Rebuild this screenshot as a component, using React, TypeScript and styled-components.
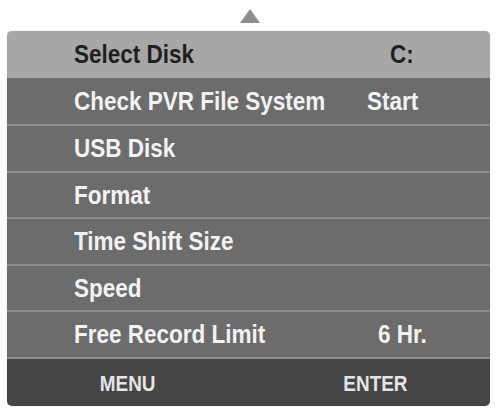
import styled, { createGlobalStyle } from "styled-components";

const GlobalStyle = createGlobalStyle`
  body {
    margin: 0;
    background: #ffffff;
    font-family: "Liberation Sans", Arial, sans-serif;
  }
`;

const items = [
  { label: "Check PVR File System", value: "Start", offset: 0, height: 46 },
  { label: "USB Disk", value: "", offset: 0, height: 47 },
  { label: "Format", value: "", offset: 0, height: 46 },
  { label: "Time Shift Size", value: "", offset: 0, height: 47 },
  { label: "Speed", value: "", offset: 0, height: 46 },
  { label: "Free Record Limit", value: "6 Hr.", offset: 11, height: 47 },
];

const App = () => {
  return (
    <Page>
      <GlobalStyle />
      <ArrowUp />
      <Panel>
        <HeaderRow>
          <Label>Select Disk</Label>
          <Value offset={23}>C:</Value>
        </HeaderRow>
        {items.map((item) => (
          <Row key={item.label} h={item.height}>
            <Label>{item.label}</Label>
            <Value offset={item.offset}>{item.value}</Value>
          </Row>
        ))}
        <Footer>
          <FooterKey>MENU</FooterKey>
          <FooterKey>ENTER</FooterKey>
        </Footer>
      </Panel>
    </Page>
  );
};

const Page = styled.div`
  width: 496px;
  height: 412px;
  padding-top: 9px;
  box-sizing: border-box;
  display: flex;
  flex-direction: column;
`;

const ArrowUp = styled.div`
  width: 0;
  height: 0;
  margin-left: 240px;
  border-left: 10.5px solid transparent;
  border-right: 10.5px solid transparent;
  border-bottom: 14px solid #8e8e8e;
`;

const Panel = styled.div`
  margin: 8px 0 0 7px;
  width: 483px;
  border-radius: 5px;
  overflow: hidden;
  box-shadow: 0 0 1px #9a9a9a;
  display: flex;
  flex-direction: column;
`;

const RowBase = styled.div`
  display: grid;
  grid-template-columns: 293px 1fr;
  align-items: center;
  padding-left: 67px;
  box-sizing: border-box;
  font-size: 25px;
  font-weight: bold;
`;

const HeaderRow = styled(RowBase)`
  height: 47px;
  background: #a7a7a7;
  color: #1f1f1f;
`;

const Row = styled(RowBase)<{ h: number }>`
  height: ${({ h }) => h}px;
  background: #6c6c6c;
  color: #f2f2f2;

  & + & {
    border-top: 2px solid #8d8d8d;
  }
`;

// the OSD font is a narrow bold face: squeeze the sans horizontally
const Label = styled.span`
  display: inline-block;
  white-space: nowrap;
  transform: scaleX(0.9);
  transform-origin: left center;
`;

const Value = styled(Label)<{ offset: number }>`
  margin-left: ${({ offset }) => offset}px;
`;

const Footer = styled.div`
  height: 49px;
  background: #454545;
  border-top: 2px solid #8d8d8d;
  box-sizing: border-box;
  display: flex;
  align-items: center;
  justify-content: space-between;
  padding: 3px 78px 0 89px;
`;

const FooterKey = styled.span`
  display: inline-block;
  color: #e4e4e4;
  font-size: 21.5px;
  font-weight: bold;
  transform: scaleX(0.88);
  transform-origin: center;
`;

export default App;
